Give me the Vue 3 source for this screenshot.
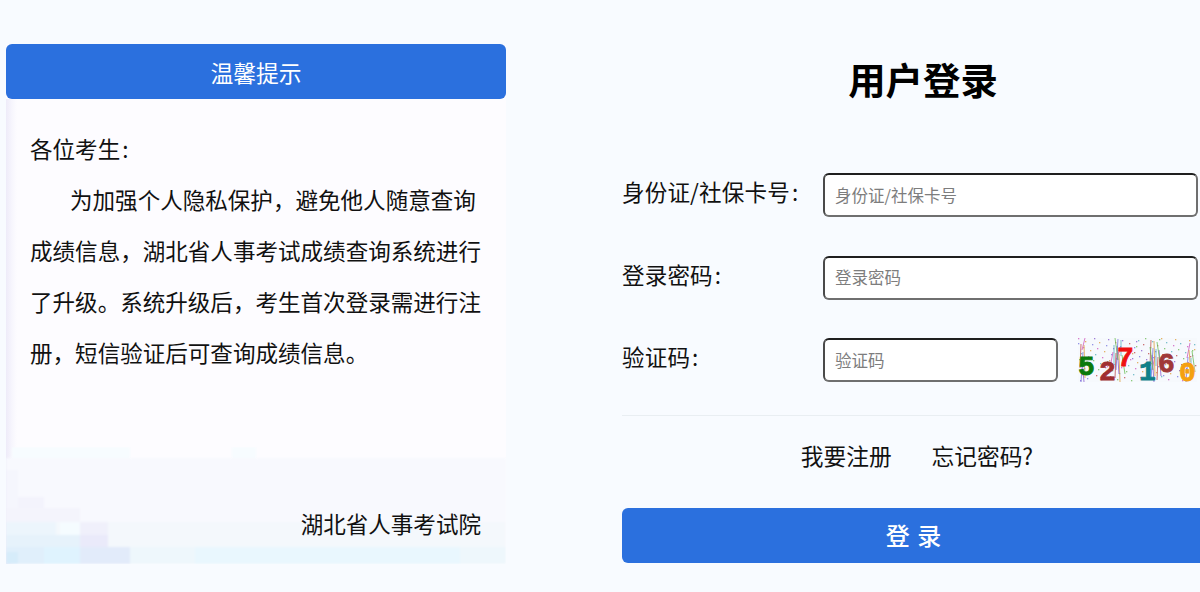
<script setup>
const notice = '为加强个人隐私保护，避免他人随意查询成绩信息，湖北省人事考试成绩查询系统进行了升级。系统升级后，考生首次登录需进行注册，短信验证后可查询成绩信息。'
const colors = ['#d05ac0', '#6fbf5a', '#8a5fd0', '#e0a040', '#5ab0c0', '#c05050', '#7a7ae0']
const noise = Array.from({ length: 30 }, (_, i) => {
  const x = (i * 37 + 4) % 112 + 3
  const lean = ((i * 13) % 7) - 3
  const y = (i * 17) % 22
  return { x1: x, y1: y, x2: x + lean, y2: Math.min(44, y + 12 + (i * 7) % 24), c: colors[i % 7] }
})
const dots = Array.from({ length: 130 }, (_, i) => ({
  x: (i * 29) % 118,
  y: (i * 23) % 43,
  c: colors[i % 7]
}))
const digits = [
  { t: '5', x: 0, y: 37, c: '#0a7a0a' },
  { t: '2', x: 21, y: 42, c: '#a03030' },
  { t: '7', x: 39, y: 28, c: '#ee1111' },
  { t: '1', x: 61, y: 42, c: '#0f8088' },
  { t: '6', x: 80, y: 34, c: '#a03838' },
  { t: '0', x: 101, y: 43, c: '#f5a010' }
]
// [x, y, width, height, colour], in px from the wash's top-left corner
const blotches = [
  [6, 0, 118, 11, '#f7fcff'], [226, 0, 24, 11, '#f7fcff'],
  [0, 11, 500, 64, '#f8f9fe'],
  [0, 23, 12, 52, '#f5f6fd'], [12, 50, 26, 25, '#f3f3fc'], [0, 61, 74, 14, '#f4f4fc'],
  [0, 75, 500, 25, '#f4f8fc'],
  [0, 75, 50, 25, '#ecf5fc'], [54, 75, 20, 13, '#f5fcff'], [74, 75, 28, 25, '#f0f0fb'],
  [0, 88, 74, 12, '#e6f2fb'], [74, 88, 28, 12, '#eaeafa'],
  [0, 100, 500, 17, '#eef7fc'],
  [0, 100, 38, 17, '#e0effb'], [38, 100, 36, 17, '#dff3fe'], [74, 100, 50, 17, '#e2ebfa'],
  [189, 100, 265, 17, '#e9f7fe'],
  [0, 105, 12, 12, '#d6ecfa']
]
</script>

<template>
  <div class="page">
    <section class="notice">
      <h2 class="notice-head">温馨提示</h2>
      <div class="notice-body">
        <div class="wash-clip" aria-hidden="true">
          <svg class="wash" viewBox="0 0 500 117" width="500" height="117">
            <rect v-for="(b, i) in blotches" :key="i" :x="b[0]" :y="b[1]" :width="b[2]" :height="b[3]" :fill="b[4]" />
          </svg>
        </div>
        <p class="greet">各位考生<span class="colon">:</span></p>
        <p class="para">{{ notice }}</p>
        <p class="sign">湖北省人事考试院</p>
      </div>
    </section>

    <section class="login">
      <h1 class="title">用户登录</h1>
      <form class="form" @submit.prevent>
        <div class="row">
          <label class="label">身份证/社保卡号<span class="colon">:</span></label>
          <input class="field" placeholder="身份证/社保卡号" />
        </div>
        <div class="row">
          <label class="label">登录密码<span class="colon">:</span></label>
          <input class="field" placeholder="登录密码" />
        </div>
        <div class="row">
          <label class="label">验证码<span class="colon">:</span></label>
          <input class="field short" placeholder="验证码" />
          <svg class="captcha" viewBox="0 0 119 44" width="119" height="44">
            <rect width="119" height="44" fill="#f6f9fd" />
            <rect v-for="(d, i) in dots" :key="'d' + i" :x="d.x" :y="d.y" width="1.3" height="1.3" :fill="d.c" opacity="0.8" />
            <line v-for="(n, i) in noise" :key="'n' + i" :x1="n.x1" :y1="n.y1" :x2="n.x2" :y2="n.y2" :stroke="n.c" stroke-width="1" opacity="0.8" />
            <text v-for="d in digits" :key="d.t + d.x" :x="d.x" :y="d.y" :fill="d.c" :stroke="d.c" class="digit">{{ d.t }}</text>
          </svg>
        </div>
        <div class="links">
          <a class="link">我要注册</a>
          <a class="link">忘记密码?</a>
        </div>
        <button class="submit" type="button">登 录</button>
      </form>
    </section>
  </div>
</template>

<style scoped>
.page {
  display: flex;
  align-items: flex-start;
  width: 1200px;
  height: 592px;
  box-sizing: border-box;
  padding: 44px 0 0 6px;
  background: #f8fbff;
  font-family: "Noto Sans CJK SC", "Liberation Sans", sans-serif;
  color: #111;
  overflow: hidden;
}
.notice {
  flex: 0 0 500px;
  height: 520px;
  display: flex;
  flex-direction: column;
  background: #fdfcff;
}
.notice-head {
  position: relative;
  z-index: 1;
  margin: 0;
  height: 55px;
  line-height: 57px;
  text-align: center;
  font-size: 22.8px;
  font-weight: 400;
  color: #fff;
  background: #2b70de;
  border-radius: 6px;
}
.notice-body {
  position: relative;
  flex: 1;
  display: flex;
  flex-direction: column;
  padding: 24px 25px 15px 24px;
  font-size: 22.55px;
  line-height: 51px;
  background: linear-gradient(90deg, #eeebf9 0, #f7f6fd 6px, rgba(253, 252, 255, 0) 11px);
}
.wash-clip {
  position: absolute;
  left: 0;
  bottom: 0;
  width: 500px;
  height: 117px;
  overflow: hidden;
}
.wash {
  display: block;
  filter: blur(1px);
}
.greet,
.para,
.sign {
  position: relative;
  margin: 0;
}
.colon {
  margin-left: 2px;
}
.para {
  text-indent: 40px;
}
.sign {
  margin-top: auto;
  text-align: right;
}
.login {
  flex: 0 0 584px;
  margin-left: 116px;
}
.title {
  margin: 10px 0 0;
  padding-left: 18px;
  height: 50px;
  line-height: 50px;
  text-align: center;
  font-size: 37.4px;
  font-weight: 700;
  color: #000;
}
.form {
  display: flex;
  flex-direction: column;
  margin-top: 69px;
}
.row {
  display: flex;
  align-items: center;
  height: 44px;
  margin-bottom: 38.5px;
}
.label {
  flex: 0 0 201px;
  padding-bottom: 8px;
  font-size: 22.55px;
  letter-spacing: 0.15px;
  white-space: nowrap;
}
.field {
  width: 375px;
  height: 44px;
  box-sizing: border-box;
  padding: 0 10px 1px;
  border: 2px solid;
  border-color: #1f1f1f #6f6f6f #6f6f6f #4a4a4a;
  border-radius: 6px;
  background: #fff;
  font: inherit;
  font-size: 16.5px;
  outline: none;
}
.field::placeholder {
  color: #7d7d7d;
}
.field.short {
  width: 235px;
}
.captcha {
  flex: none;
  margin-left: 20px;
  overflow: visible;
}
.digit {
  font-family: "Liberation Mono", monospace;
  font-size: 28px;
  font-weight: 700;
  stroke-width: 0.8px;
}
.links {
  display: flex;
  justify-content: center;
  gap: 40px;
  height: 92px;
  margin-top: -5.5px;
  padding-left: 6px;
  border-top: 1px solid #e9eef2;
  line-height: 80px;
  font-size: 22.7px;
  color: #111;
}
.submit {
  width: 584px;
  height: 55px;
  padding: 0 0 2px;
  border: 0;
  border-radius: 6px;
  background: #2b70de;
  color: #fff;
  font: inherit;
  font-size: 24px;
  font-weight: 500;
  letter-spacing: 1px;
}
</style>

<style>
html,
body {
  margin: 0;
  overflow: hidden;
}
</style>
